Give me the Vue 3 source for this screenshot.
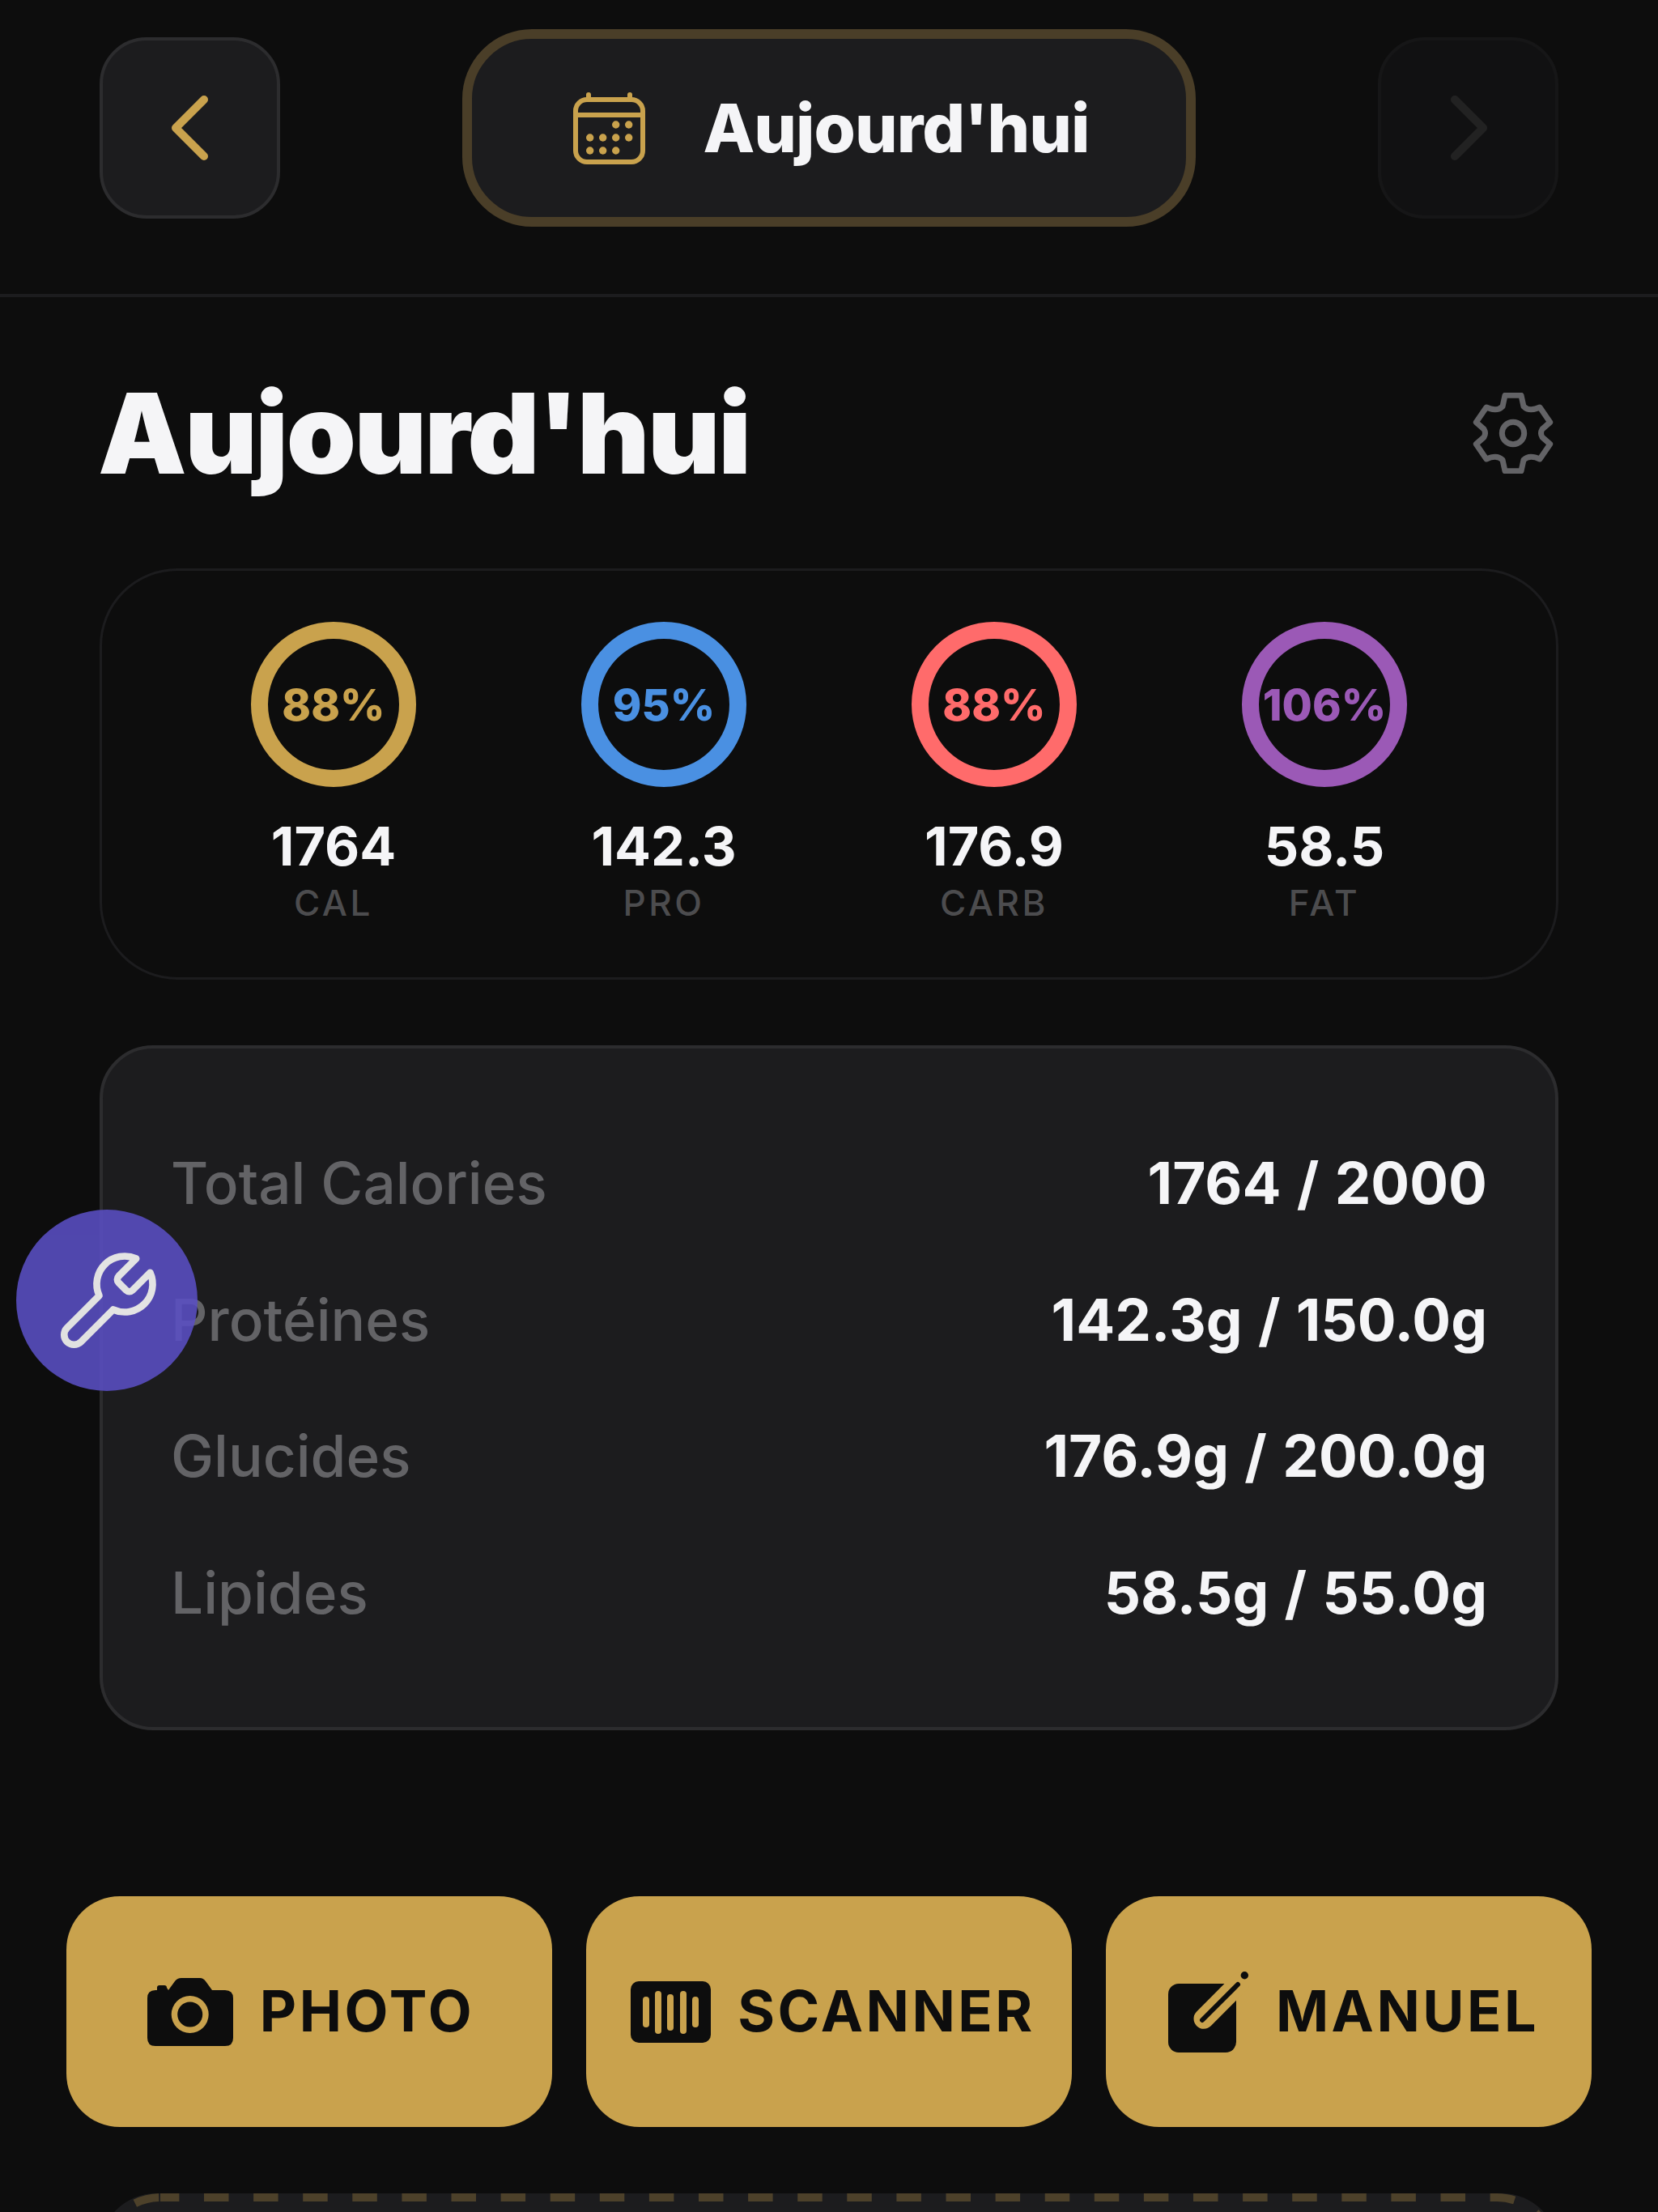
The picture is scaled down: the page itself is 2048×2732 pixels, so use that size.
<template>
  <div class="app">
    <header class="top-bar">
      <button class="nav-btn">
        <svg width="60" height="96" viewBox="0 0 60 96" fill="none" stroke="#c9a24d" stroke-width="10" stroke-linecap="round" stroke-linejoin="round">
          <path d="M47 13 L12 48 L47 83" />
        </svg>
      </button>
      <div class="date-pill">
        <svg class="cal-icon" width="89" height="89" viewBox="0 0 89 89" fill="none" stroke="#c9a24d" stroke-width="6">
          <rect x="3" y="9" width="83" height="77" rx="14" />
          <path d="M3 28 H86" />
          <path d="M19 3 V9 M70 3 V9" stroke-linecap="round" />
          <g fill="#c9a24d" stroke="none">
            <circle v-for="d in calDots" :key="d[0] + '-' + d[1]" :cx="d[0]" :cy="d[1]" r="4.7" />
          </g>
        </svg>
        <span>Aujourd'hui</span>
      </div>
      <button class="nav-btn disabled">
        <svg width="60" height="96" viewBox="0 0 60 96" fill="none" stroke="#c9a24d" stroke-width="10" stroke-linecap="round" stroke-linejoin="round">
          <path d="M13 13 L48 48 L13 83" />
        </svg>
      </button>
    </header>

    <main class="content">
      <div class="title-row">
        <h1>Aujourd'hui</h1>
        <svg width="100" height="100" viewBox="-50 -50 100 100" fill="none" stroke="#636366" stroke-width="7" stroke-linejoin="round">
          <path d="M-10 -46.7 L10 -46.7 L13 -33 Q20 -26 33 -32 L45.7 -13.5 L36 -5 Q33 0 36 5 L45.7 13.5 L33 32 Q20 26 13 33 L10 46.7 L-10 46.7 L-13 33 Q-20 26 -33 32 L-45.7 13.5 L-36 5 Q-33 0 -36 -5 L-45.7 -13.5 L-33 -32 Q-20 -26 -13 -33 Z" />
          <circle r="13.7" />
        </svg>
      </div>

      <section class="macro-card">
        <div v-for="m in macros" :key="m.label" class="macro">
          <div class="ring" :style="{ borderColor: m.color, color: m.color }">{{ m.pct }}</div>
          <div class="macro-value">{{ m.value }}</div>
          <div class="macro-label">{{ m.label }}</div>
        </div>
      </section>

      <section class="detail-card">
        <div v-for="r in rows" :key="r.name" class="detail-row">
          <span class="detail-name">{{ r.name }}</span>
          <span class="detail-value">{{ r.value }}</span>
        </div>
      </section>
    </main>

    <div class="actions">
      <button class="action-btn">
        <svg width="106" height="84" viewBox="0 0 106 84">
          <path fill="#0d0d0d" fill-rule="evenodd" d="M26 15 L34 4 Q37 0 42 0 H65 Q69 0 72 4 L80 15 H96 Q106 15 106 25 V74 Q106 84 96 84 H10 Q0 84 0 74 V25 Q0 15 10 15 H12 V12 Q12 9 15 9 H21 Q24 9 24 12 Z M52.7 22 A23 23 0 1 0 52.71 68 A23 23 0 1 0 52.7 22 Z" />
          <circle cx="52.7" cy="45" r="15.5" fill="#0d0d0d" />
        </svg>
        <span>PHOTO</span>
      </button>
      <button class="action-btn scanner">
        <svg width="99" height="76" viewBox="0 0 99 76">
          <rect width="99" height="76" rx="10" fill="#0d0d0d" />
          <g fill="#c9a24d">
            <rect v-for="b in scanBars" :key="b[0]" :x="b[0] - 4" :y="b[1]" width="8" :height="b[2]" rx="4" />
          </g>
        </svg>
        <span>SCANNER</span>
      </button>
      <button class="action-btn manual">
        <svg width="100" height="100" viewBox="0 0 100 100">
          <rect y="15" width="84" height="85" rx="13" fill="#0d0d0d" />
          <path d="M44 58.3 L88 14" stroke="#c9a24d" stroke-width="25" stroke-linecap="round" />
          <path d="M42 60 L86 16" stroke="#0d0d0d" stroke-width="6" stroke-linecap="round" />
          <circle cx="94.3" cy="4.7" r="4.7" fill="#0d0d0d" />
        </svg>
        <span>MANUEL</span>
      </button>
    </div>

    <section class="dashed-card">
      <svg width="1801" height="400" viewBox="0 0 1801 400" fill="none">
        <rect x="5" y="5" width="1791" height="390" rx="70" stroke="#4d412a" stroke-width="10" stroke-dasharray="30.5 30.6" stroke-dashoffset="-54" />
      </svg>
    </section>

    <button class="dev-fab">
      <svg width="138" height="138" viewBox="0 0 24 24" fill="none" stroke="#fff" stroke-width="1.5" stroke-linecap="round" stroke-linejoin="round">
        <path d="M14.7 6.3a1 1 0 0 0 0 1.4l1.6 1.6a1 1 0 0 0 1.4 0l3.77-3.77a6 6 0 0 1-7.94 7.94l-6.91 6.91a2.12 2.12 0 0 1-3-3l6.91-6.91a6 6 0 0 1 7.94-7.94l-3.76 3.76z" />
      </svg>
    </button>
  </div>
</template>

<script setup>
const calDots = [
  [52.7, 40], [68.7, 40],
  [20.7, 56], [36.7, 56], [52.7, 56], [68.7, 56],
  [20.7, 72], [36.7, 72], [52.7, 72],
]

const scanBars = [
  [19, 19, 38], [34, 12, 53], [49, 16, 45], [65, 12, 53], [80, 19, 38],
]

const macros = [
  { pct: '88%', value: '1764', label: 'CAL', color: '#c9a24d' },
  { pct: '95%', value: '142.3', label: 'PRO', color: '#4a90e2' },
  { pct: '88%', value: '176.9', label: 'CARB', color: '#ff6b6b' },
  { pct: '106%', value: '58.5', label: 'FAT', color: '#9b59b6' },
]

const rows = [
  { name: 'Total Calories', value: '1764 / 2000' },
  { name: 'Protéines', value: '142.3g / 150.0g' },
  { name: 'Glucides', value: '176.9g / 200.0g' },
  { name: 'Lipides', value: '58.5g / 55.0g' },
]
</script>

<style>
html,
body {
  margin: 0;
  background: #0d0d0d;
}
</style>

<style scoped>
.app {
  position: relative;
  width: 2048px;
  height: 2732px;
  overflow: hidden;
  background: #0d0d0d;
  color: #f5f5f7;
  font-family: Inter, "Noto Sans", sans-serif;
}

button {
  font-family: inherit;
  border: none;
  padding: 0;
}

.top-bar {
  display: flex;
  align-items: center;
  justify-content: space-between;
  height: 244px;
  padding: 36px 123px 83px;
  border-bottom: 4px solid #1c1c1e;
}

.nav-btn {
  display: flex;
  align-items: center;
  justify-content: center;
  width: 223px;
  height: 224px;
  background: #1c1c1e;
  border: 4px solid #2c2c2e;
  border-radius: 58px;
  box-sizing: border-box;
}

.nav-btn.disabled {
  opacity: 0.3;
}

.nav-btn.disabled svg {
  stroke: #555;
}

.date-pill {
  display: flex;
  align-items: center;
  justify-content: center;
  gap: 71px;
  width: 906px;
  height: 244px;
  box-sizing: border-box;
  padding-left: 6px;
  background: #1c1c1e;
  border: 12px solid #4a3e28;
  border-radius: 86px;
  font-size: 83px;
  font-weight: 800;
  letter-spacing: -1px;
}

.title-row {
  display: flex;
  align-items: center;
  justify-content: space-between;
  height: 335px;
  padding: 0 129px 0 121px;
}

h1 {
  margin: 0;
  font-size: 138px;
  font-weight: 900;
  letter-spacing: -2.5px;
}

.macro-card {
  display: grid;
  grid-template-columns: repeat(4, 408px);
  justify-content: center;
  height: 508px;
  margin: 0 123px;
  box-sizing: border-box;
  padding-top: 63px;
  border: 3px solid #1c1c1e;
  border-radius: 96px;
}

.macro {
  display: flex;
  flex-direction: column;
  align-items: center;
}

.ring {
  display: flex;
  align-items: center;
  justify-content: center;
  width: 204px;
  height: 204px;
  box-sizing: border-box;
  border: 21px solid;
  border-radius: 50%;
  font-size: 54px;
  font-weight: 800;
  white-space: nowrap;
}

.macro-value {
  margin-top: 33px;
  font-size: 66.5px;
  line-height: 80px;
  font-weight: 700;
}

.macro-label {
  margin-top: 3px;
  font-size: 44px;
  line-height: 54px;
  font-weight: 500;
  letter-spacing: 3.5px;
  color: #4c4c4e;
}

.detail-card {
  display: flex;
  flex-direction: column;
  justify-content: center;
  height: 846px;
  margin: 81px 123px 0;
  box-sizing: border-box;
  padding: 0 84px 0;
  background: #1c1c1e;
  border: 4px solid #2c2c2e;
  border-radius: 66px;
}

.detail-row {
  display: flex;
  align-items: center;
  justify-content: space-between;
  height: 168.5px;
  font-size: 71px;
}

.detail-name {
  color: #636366;
  font-weight: 500;
}

.detail-value {
  font-weight: 700;
  word-spacing: 2.5px;
}

.actions {
  display: grid;
  grid-template-columns: repeat(3, 600px);
  gap: 42px;
  margin: 205px 82px 0;
}

.action-btn {
  display: flex;
  align-items: center;
  justify-content: center;
  gap: 33px;
  height: 285px;
  background: #c9a24d;
  color: #0d0d0d;
  border-radius: 66px;
  font-size: 70px;
  font-weight: 700;
  letter-spacing: 3.5px;
}

.action-btn.scanner {
  padding-left: 6px;
}

.action-btn.manual {
  padding-left: 8px;
}

.action-btn span {
  margin-right: -4px;
  position: relative;
  top: -1px;
}

.dashed-card {
  height: 400px;
  margin: 82px 123px 0;
  background: #1c1c1e;
  border-radius: 70px;
}

.dashed-card svg {
  display: block;
}

.dev-fab {
  position: absolute;
  left: 20px;
  top: 1494px;
  display: flex;
  align-items: center;
  justify-content: center;
  width: 224px;
  height: 224px;
  border-radius: 50%;
  background: #5a4fc4;
  opacity: 0.88;
}

.dev-fab svg {
  position: relative;
  top: 3px;
  left: -1px;
}
</style>
